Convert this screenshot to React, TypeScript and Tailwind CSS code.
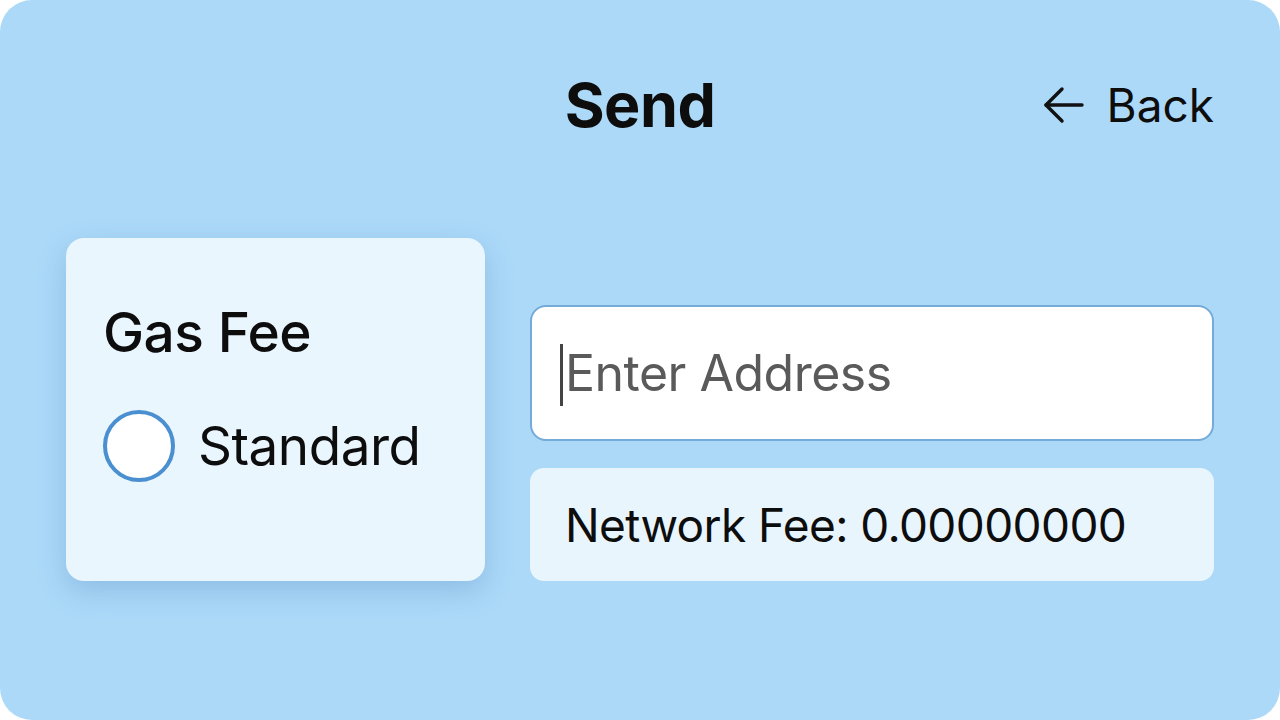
import { useState } from 'react';

function BackArrow() {
  return (
    <svg width="41" height="38" viewBox="0 0 41 38" fill="none" stroke="#111" strokeWidth="3.4" strokeLinecap="round" strokeLinejoin="round">
      <path d="M39 19H3" />
      <path d="M19 3 3 19l16 16" />
    </svg>
  );
}

export default function App() {
  const [address, setAddress] = useState('');
  const [fee] = useState('0.00000000');

  return (
    <div className="w-[1280px] h-[720px] bg-white font-['Inter','Liberation_Sans',sans-serif] text-[#0d0d0d]">
      <div className="h-full rounded-[32px] bg-[#acd9f8] px-[66px] flex flex-col">
        {/* header */}
        <div className="mt-[70px] h-[70px] grid grid-cols-[1fr_auto_1fr] items-center">
          <div />
          <h1 className="text-[61px] font-bold leading-none tracking-[-0.5px]">Send</h1>
          <button className="justify-self-end flex items-center gap-[23px] text-[46px] leading-none">
            <BackArrow />
            <span>Back</span>
          </button>
        </div>

        <div className="mt-[98px] flex items-end gap-[45px]">
          {/* gas fee card */}
          <div className="w-[419px] h-[343px] rounded-[18px] bg-[#eaf6fd] shadow-[0_10px_28px_rgba(60,120,180,0.28)] pl-[37px] pt-[67px]">
            <h2 className="text-[55px] font-medium leading-none tracking-[-0.5px]">Gas Fee</h2>
            <label className="mt-[50px] flex items-center gap-[23px]">
              <span className="w-[72px] h-[72px] rounded-full border-[4.5px] border-[#4a8fd0] bg-white" />
              <span className="text-[53px] leading-none tracking-[-0.5px]">Standard</span>
            </label>
          </div>

          {/* address + fee */}
          <div className="flex-1 flex flex-col gap-[27px]">
            <div className="relative h-[136px] rounded-[16px] border-2 border-[#74abd8] bg-white">
              <span className="absolute left-[28px] top-[37px] w-[3px] h-[62px] bg-[#444]" />
              <input
                value={address}
                onChange={(e) => setAddress(e.target.value)}
                placeholder="Enter Address"
                className="w-full h-full bg-transparent pl-[33px] text-[50px] tracking-[-0.5px] outline-none placeholder:text-[#5a5a5a]"
              />
            </div>
            <div className="h-[113px] rounded-[14px] bg-[#e8f5fd] flex items-center pl-[35px]">
              <span className="text-[46px] leading-none tracking-[-0.6px]">Network Fee: {fee}</span>
            </div>
          </div>
        </div>
      </div>
    </div>
  );
}
